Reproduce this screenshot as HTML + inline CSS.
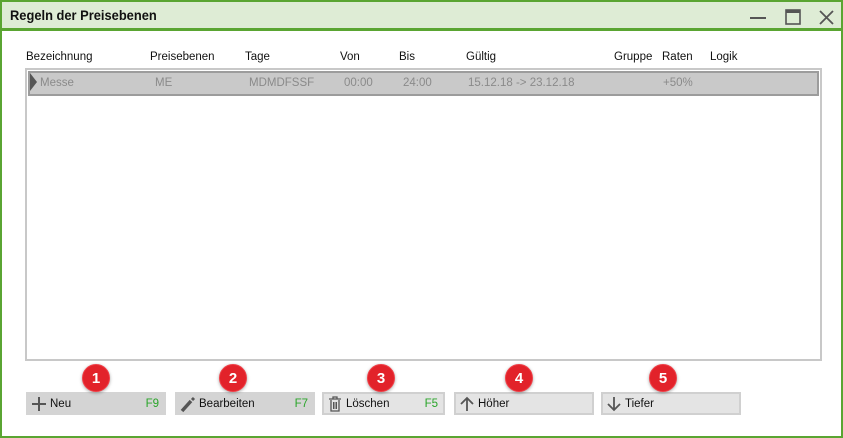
<!DOCTYPE html>
<html><head><meta charset="utf-8"><style>
*{box-sizing:border-box;margin:0;padding:0}
body{width:843px;height:438px;overflow:hidden;background:#fff;font-family:"Liberation Sans",sans-serif;position:relative}
.frame{position:absolute;left:0;top:0;width:843px;height:438px;border:2px solid #5aa532}
.title{position:absolute;left:2px;top:2px;width:839px;height:29px;background:#deecd5;border-bottom:3px solid #5aa532}
.title span{position:absolute;left:8px;top:5px;font-size:14px;font-weight:bold;color:#111;transform:scaleX(.92);transform-origin:left}
.h{position:absolute;top:51px;font-size:11.5px;color:#111}
.list{position:absolute;left:25px;top:68px;width:797px;height:293px;border:2px solid #c8c8c8}
.row{position:absolute;left:1px;top:1px;width:791px;height:25px;background:#c9c9c9;border:2px solid #9c9c9c}
.c{position:absolute;top:77px;font-size:11.5px;color:#8a8a8a}
.btn{position:absolute;top:392px;height:23px;background:#d4d4d4;font-size:11.5px;color:#111}
.btn.b{background:#e4e4e4;border:2px solid #d0d0d0}
.btn .t{position:absolute;left:24px;top:6px}
.btn .k{position:absolute;right:7px;top:6px;color:#2aa52a}
.btn svg{position:absolute;left:4px;top:3px}
.badge{position:absolute;top:364px;width:28px;height:28px;border-radius:50%;background:#e2222a;border:1px solid #f04048;box-shadow:0 1px 3px rgba(0,0,0,.35);color:#fff;font-weight:bold;font-size:15px;text-align:center;line-height:27px}
</style></head><body>
<div class="frame"></div>
<div class="title"><span>Regeln der Preisebenen</span>
<svg style="position:absolute;left:744px;top:5px" width="95" height="20"><line x1="4" y1="11" x2="20" y2="11" stroke="#555" stroke-width="2"/><rect x="40" y="3" width="14" height="14" fill="none" stroke="#555" stroke-width="1.6"/><rect x="40" y="3" width="14" height="3" fill="#555"/><path d="M74 4 L87 17 M87 4 L74 17" stroke="#555" stroke-width="1.8"/></svg>
</div>
<div class="h" style="left:26px">Bezeichnung</div>
<div class="h" style="left:150px">Preisebenen</div>
<div class="h" style="left:245px">Tage</div>
<div class="h" style="left:340px">Von</div>
<div class="h" style="left:399px">Bis</div>
<div class="h" style="left:466px">Gültig</div>
<div class="h" style="left:614px">Gruppe</div>
<div class="h" style="left:662px">Raten</div>
<div class="h" style="left:710px">Logik</div>
<div class="list"><div class="row"></div></div>
<svg style="position:absolute;left:30px;top:73px" width="8" height="18"><path d="M0 0 L7 9 L0 18Z" fill="#555"/></svg>
<div class="c" style="left:40px">Messe</div>
<div class="c" style="left:155px">ME</div>
<div class="c" style="left:249px">MDMDFSSF</div>
<div class="c" style="left:344px">00:00</div>
<div class="c" style="left:403px">24:00</div>
<div class="c" style="left:468px">15.12.18 -&gt; 23.12.18</div>
<div class="c" style="left:663px">+50%</div>

<div class="btn" style="left:26px;width:140px"><svg width="18" height="18"><path d="M9 2V16M2 9H16" stroke="#555" stroke-width="2"/></svg><span class="t">Neu</span><span class="k">F9</span></div>
<div class="btn" style="left:175px;width:140px"><svg width="18" height="18"><path d="M3 16 L12 6" stroke="#555" stroke-width="3.5"/><path d="M13 5 L15 3" stroke="#555" stroke-width="3"/></svg><span class="t">Bearbeiten</span><span class="k">F7</span></div>
<div class="btn b" style="left:322px;width:123px"><svg width="18" height="18" style="left:2px;top:1px"><path d="M3 4H15M7 4V2H11V4M5 5V16H13V5" fill="none" stroke="#555" stroke-width="1.3"/><path d="M7.5 7V14M9 7V14M10.5 7V14" stroke="#555"/></svg><span class="t" style="left:22px;top:4px">Löschen</span><span class="k" style="top:4px;right:5px">F5</span></div>
<div class="btn b" style="left:454px;width:140px"><svg width="18" height="18" style="left:2px;top:1px"><path d="M9 16V3M3 9L9 3L15 9" fill="none" stroke="#555" stroke-width="1.8"/></svg><span class="t" style="left:22px;top:4px">Höher</span></div>
<div class="btn b" style="left:601px;width:140px"><svg width="18" height="18" style="left:2px;top:1px"><path d="M9 2V15M3 9L9 15L15 9" fill="none" stroke="#555" stroke-width="1.8"/></svg><span class="t" style="left:22px;top:4px">Tiefer</span></div>

<div class="badge" style="left:82px">1</div>
<div class="badge" style="left:219px">2</div>
<div class="badge" style="left:367px">3</div>
<div class="badge" style="left:505px">4</div>
<div class="badge" style="left:649px">5</div>
</body></html>
